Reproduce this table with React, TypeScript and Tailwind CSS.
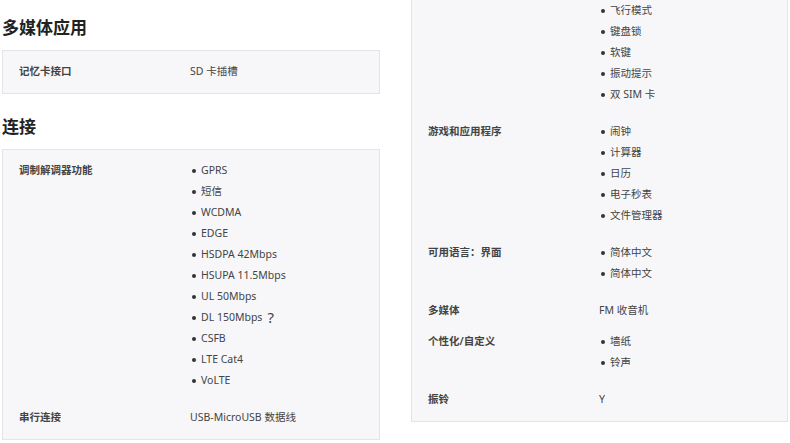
const font = { fontFamily: '"Noto Sans", "Noto Sans CJK SC", sans-serif' };

type Spec = { label: string; value: string | string[] };

const multimedia: Spec[] = [{ label: '记忆卡接口', value: 'SD 卡插槽' }];

const connection: Spec[] = [
  {
    label: '调制解调器功能',
    value: ['GPRS', '短信', 'WCDMA', 'EDGE', 'HSDPA 42Mbps', 'HSUPA 11.5Mbps', 'UL 50Mbps', 'DL 150Mbps ?', 'CSFB', 'LTE Cat4', 'VoLTE'],
  },
  { label: '串行连接', value: 'USB-MicroUSB 数据线' },
];

// first row continues from above the fold, its label is scrolled out of view
const features: Spec[] = [
  { label: '', value: ['飞行模式', '键盘锁', '软键', '振动提示', '双 SIM 卡'] },
  { label: '游戏和应用程序', value: ['闹钟', '计算器', '日历', '电子秒表', '文件管理器'] },
  { label: '可用语言：界面', value: ['简体中文', '简体中文'] },
  { label: '多媒体', value: 'FM 收音机' },
  { label: '个性化/自定义', value: ['墙纸', '铃声'] },
  { label: '振铃', value: 'Y' },
];

function SpecBox({ rows, className = '' }: { rows: Spec[]; className?: string }) {
  return (
    <div className={`bg-[#f7f7f9] border border-[#e4e4e6] pt-[10px] pb-[11px] ${className}`}>
      {rows.map((r, i) => (
        <div key={i} className={`flex text-[10.5px] leading-[21px] text-[#444] ${i < rows.length - 1 ? 'pb-[10px]' : ''}`}>
          <div className="w-[187px] shrink-0 pl-[16px] font-semibold">{r.label}</div>
          {Array.isArray(r.value) ? (
            <ul className={i < rows.length - 1 ? 'mb-[6px]' : ''}>
              {r.value.map((v, j) => (
                <li key={j} className="flex items-center h-[21px]">
                  <span className="w-[4px] h-[4px] rounded-full bg-[#333] mr-[5px] ml-[2px]"></span>
                  {v.endsWith('?') ? (
                    <>
                      {v.slice(0, -2)}
                      <span className="text-[15px] ml-[5px] leading-none">?</span>
                    </>
                  ) : v}
                </li>
              ))}
            </ul>
          ) : (
            <div>{r.value}</div>
          )}
        </div>
      ))}
    </div>
  );
}

export default function App() {
  return (
    <div className="w-[790px] h-[443px] overflow-hidden bg-white flex px-[2px] gap-[31px]" style={font}>
      <div className="w-[378px] shrink-0">
        <h2 className="text-[17px] leading-[24px] font-bold text-[#222] pt-[16px] mb-[10px]">多媒体应用</h2>
        <SpecBox rows={multimedia} />
        <h2 className="text-[17px] leading-[24px] font-bold text-[#222] mt-[21px] mb-[10px]">连接</h2>
        <SpecBox rows={connection} />
      </div>
      <div className="w-[377px] shrink-0">
        <SpecBox rows={features} className="-mt-[11px]" />
      </div>
    </div>
  );
}
